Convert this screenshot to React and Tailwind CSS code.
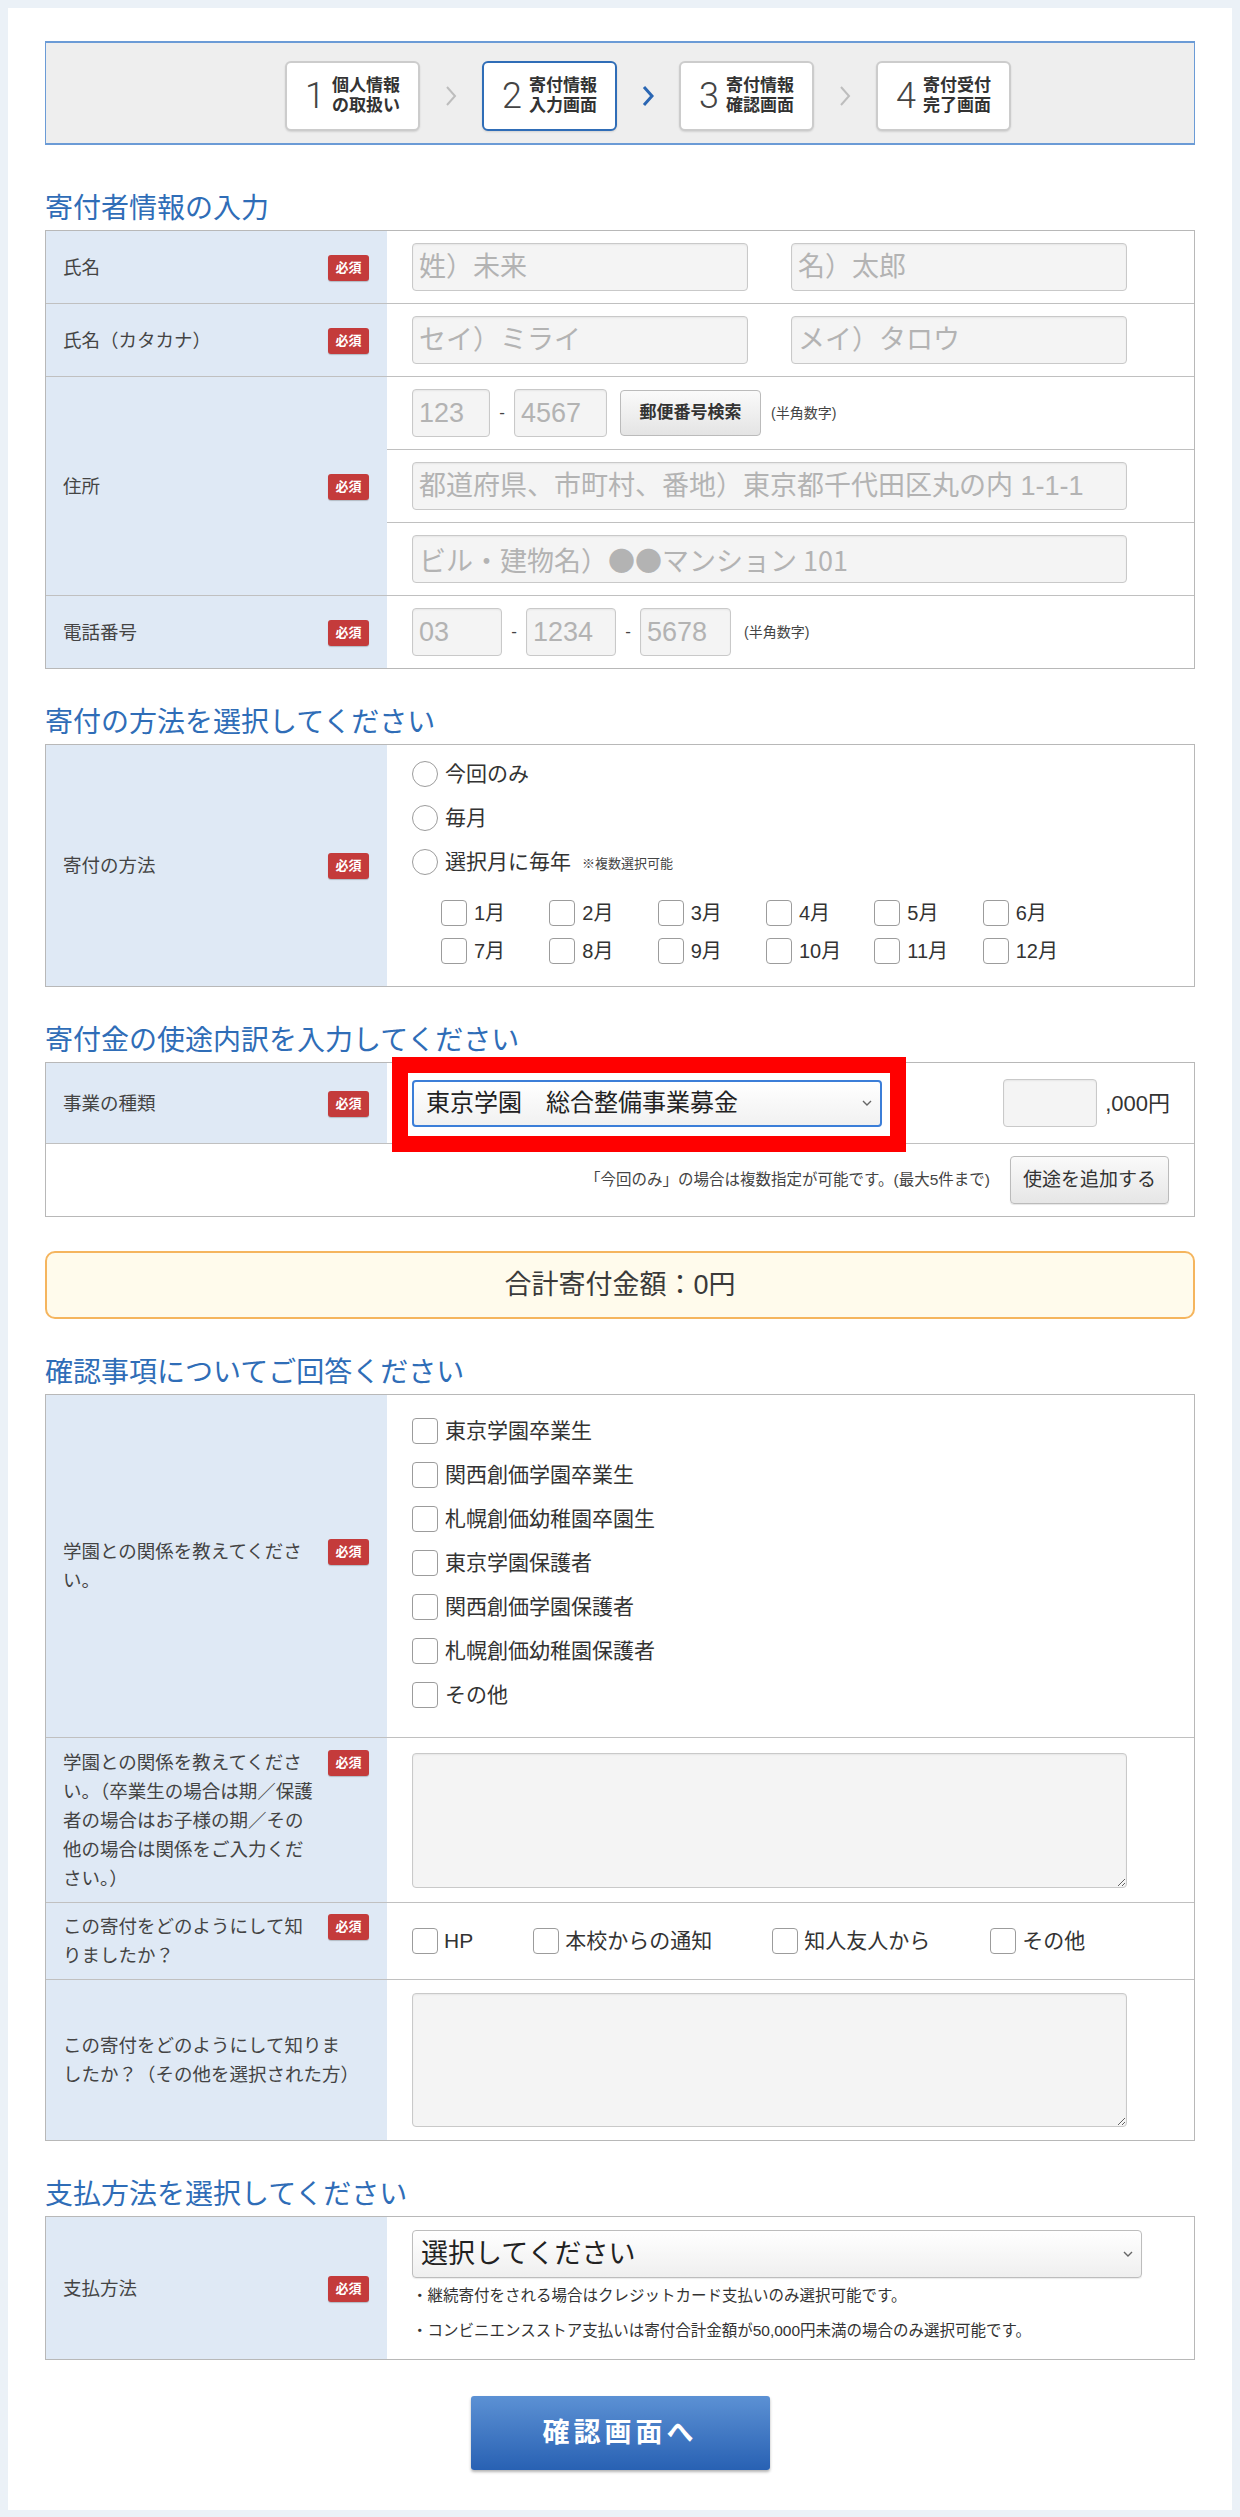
const Req = () => (
  <span className="shrink-0 w-[41px] h-[26px] mt-[2px] rounded-[3px] bg-[#c43b3b] text-white text-[13px] font-bold flex items-center justify-center shadow-[0_1px_1px_rgba(0,0,0,0.2)]">
    必須
  </span>
);

const Label = ({ children, req = true }) => (
  <div className="w-[341px] shrink-0 bg-[#dfe9f5] flex items-center pl-[17px] pr-[18px] py-[9px]">
    <div className="flex-1 flex items-start justify-between gap-2">
      <span className="text-[18.5px] leading-[29px] text-[#444] whitespace-nowrap">{children}</span>
      {req && <Req />}
    </div>
  </div>
);

const Row = ({ label, req = true, first = false, valueClass = '', children }) => (
  <div className={`flex ${first ? '' : 'border-t border-[#c0c0c0]'}`}>
    <Label req={req}>{label}</Label>
    <div className={`flex-1 ${valueClass}`}>{children}</div>
  </div>
);

const TextInput = ({ placeholder, w, cjk = false }) => (
  <input
    className={`${w} h-[48px] shrink-0 rounded-[4px] border border-[#c9c9c9] bg-[#f4f4f4] px-[6px] text-[27px] text-[#333] placeholder:text-[#b3b3b3] shadow-[inset_0_1px_2px_rgba(0,0,0,0.06)] outline-none ${
      cjk ? "font-['Noto_Sans_CJK_JP',sans-serif]" : ''
    }`}
    placeholder={placeholder}
  />
);

const Dash = () => <span className="w-[24px] text-center text-[17px] text-[#444]">-</span>;

const Radio = () => (
  <span className="w-[26px] h-[26px] shrink-0 rounded-full border border-[#9c9c9c] bg-white" />
);

const Check = () => (
  <span className="w-[26px] h-[26px] shrink-0 rounded-[4px] border border-[#9c9c9c] bg-white" />
);

const Caret = () => (
  <svg width="10" height="7" viewBox="0 0 10 7" className="shrink-0">
    <polyline points="1,1 5,5 9,1" fill="none" stroke="#666" strokeWidth="1.4" />
  </svg>
);

const Heading = ({ children, top = 'mt-[36px]' }) => (
  <h2 className={`${top} mb-[3px] text-[28px] leading-[36px] text-[#2f6db7]`}>{children}</h2>
);

const Step = ({ n, l1, l2, active }) => (
  <div
    className={`w-[135px] h-[70px] rounded-[6px] bg-white flex items-center justify-center gap-[7px] shadow-[0_1px_2px_rgba(0,0,0,0.12)] ${
      active ? 'border-2 border-[#2f6db7]' : 'border-2 border-[#cccccc]'
    }`}
  >
    <span className="font-['Roboto'] font-light text-[36px] leading-none text-[#444]">{n}</span>
    <span className="text-[17px] leading-[20px] font-bold text-[#333]">
      {l1}
      <br />
      {l2}
    </span>
  </div>
);

const Chevron = ({ active }) => (
  <div className="w-[62px] flex justify-center">
    <svg width="12" height="22" viewBox="0 0 12 22">
      <polyline
        points="2,2 10,11 2,20"
        fill="none"
        stroke={active ? '#2a66b3' : '#bdbdbd'}
        strokeWidth={active ? 3 : 2}
      />
    </svg>
  </div>
);

const months = ['1月', '2月', '3月', '4月', '5月', '6月', '7月', '8月', '9月', '10月', '11月', '12月'];
const relations = ['東京学園卒業生', '関西創価学園卒業生', '札幌創価幼稚園卒園生', '東京学園保護者', '関西創価学園保護者', '札幌創価幼稚園保護者', 'その他'];
const sources = ['HP', '本校からの通知', '知人友人から', 'その他'];

export default function App() {
  return (
    <div className="min-h-screen bg-[#ebf1f7] p-2 font-['Liberation_Sans','Noto_Sans_CJK_JP',sans-serif] text-[#333]">
      <div className="bg-white px-[37px] pt-[33px] pb-[40px]">
        {/* Steps */}
        <div className="h-[104px] bg-[#eeeeee] border-y-2 border-x border-[#6b9bd6] flex items-center justify-center pt-[6px] pl-[56px]">
          <Step n="1" l1="個人情報" l2="の取扱い" />
          <Chevron />
          <Step n="2" l1="寄付情報" l2="入力画面" active />
          <Chevron active />
          <Step n="3" l1="寄付情報" l2="確認画面" />
          <Chevron />
          <Step n="4" l1="寄付受付" l2="完了画面" />
        </div>

        {/* 寄付者情報 */}
        <Heading top="mt-[46px]">寄付者情報の入力</Heading>
        <div className="border border-[#b8b8b8]">
          <Row label="氏名" first valueClass="flex items-center gap-[43px] px-[25px] py-3">
            <TextInput w="w-[336px]" placeholder="姓）未来" />
            <TextInput w="w-[336px]" placeholder="名）太郎" />
          </Row>
          <Row label="氏名（カタカナ）" valueClass="flex items-center gap-[43px] px-[25px] py-3">
            <TextInput w="w-[336px]" placeholder="セイ）ミライ" />
            <TextInput w="w-[336px]" placeholder="メイ）タロウ" />
          </Row>
          <Row label="住所">
            <div className="flex items-center px-[25px] py-3">
              <TextInput w="w-[78px]" placeholder="123" />
              <Dash />
              <TextInput w="w-[93px]" placeholder="4567" />
              <button className="ml-[13px] w-[141px] h-[46px] rounded-[4px] border border-[#bbbbbb] bg-gradient-to-b from-[#fafafa] to-[#e4e4e4] text-[17px] font-bold text-[#333]">
                郵便番号検索
              </button>
              <span className="ml-[10px] text-[14px] text-[#444]">(半角数字)</span>
            </div>
            <div className="border-t border-[#c0c0c0] px-[25px] py-3">
              <TextInput w="w-[715px]" placeholder="都道府県、市町村、番地）東京都千代田区丸の内 1-1-1" />
            </div>
            <div className="border-t border-[#c0c0c0] px-[25px] py-3">
              <TextInput w="w-[715px]" cjk placeholder="ビル・建物名）●●マンション 101" />
            </div>
          </Row>
          <Row label="電話番号" valueClass="flex items-center px-[25px] py-3">
            <TextInput w="w-[90px]" placeholder="03" />
            <Dash />
            <TextInput w="w-[90px]" placeholder="1234" />
            <Dash />
            <TextInput w="w-[91px]" placeholder="5678" />
            <span className="ml-[13px] text-[14px] text-[#444]">(半角数字)</span>
          </Row>
        </div>

        {/* 寄付の方法 */}
        <Heading>寄付の方法を選択してください</Heading>
        <div className="border border-[#b8b8b8]">
          <Row label="寄付の方法" first valueClass="px-[25px] pt-[7px] pb-[16px]">
            <div className="h-[44px] flex items-center gap-[7px]">
              <Radio />
              <span className="text-[21px]">今回のみ</span>
            </div>
            <div className="h-[44px] flex items-center gap-[7px]">
              <Radio />
              <span className="text-[21px]">毎月</span>
            </div>
            <div className="h-[44px] flex items-center gap-[7px]">
              <Radio />
              <span className="text-[21px]">選択月に毎年</span>
              <span className="ml-[4px] mt-[4px] text-[13px] text-[#444]">※複数選択可能</span>
            </div>
            <div className="mt-[10px] ml-[29px] w-[650px] grid grid-cols-6">
              {months.map((m) => (
                <div key={m} className="h-[38px] flex items-center gap-[7px]">
                  <Check />
                  <span className="text-[20px]">{m}</span>
                </div>
              ))}
            </div>
          </Row>
        </div>

        {/* 使途内訳 */}
        <Heading>寄付金の使途内訳を入力してください</Heading>
        <div className="border border-[#b8b8b8]">
          <Row label="事業の種類" first valueClass="flex items-center pl-[25px] pr-[24px] py-[16px]">
            <div className="relative w-[470px] h-[47px] shrink-0">
              <div className="h-full rounded-[4px] border-2 border-[#3b7ed8] bg-gradient-to-b from-white to-[#f1f1f1] flex items-center justify-between pl-[12px] pr-[8px]">
                <span className="text-[24px] text-[#222]">東京学園　総合整備事業募金</span>
                <Caret />
              </div>
              <div className="absolute -left-[20px] -right-[24px] -top-[23px] -bottom-[25px] border-[16px] border-[#ff0000] z-10 pointer-events-none" />
            </div>
            <div className="ml-auto flex items-center">
              <TextInput w="w-[94px]" placeholder="" />
              <span className="ml-[8px] text-[22px] text-[#333]">,000円</span>
            </div>
          </Row>
          <div className="border-t border-[#c0c0c0] flex items-center justify-end gap-[20px] py-3 pr-[25px]">
            <span className="text-[15.5px] text-[#444]">「今回のみ」の場合は複数指定が可能です。(最大5件まで)</span>
            <button className="w-[159px] h-[48px] rounded-[4px] border border-[#bbbbbb] bg-gradient-to-b from-[#fafafa] to-[#e6e6e6] text-[19px] text-[#333] shadow-[0_1px_1px_rgba(0,0,0,0.1)]">
              使途を追加する
            </button>
          </div>
        </div>

        {/* 合計 */}
        <div className="mt-[34px] h-[68px] rounded-[10px] border-2 border-[#f5b55e] bg-[#fffbec] flex items-center justify-center">
          <span className="text-[27px] text-[#3a3a3a]">合計寄付金額：0円</span>
        </div>

        {/* 確認事項 */}
        <Heading>確認事項についてご回答ください</Heading>
        <div className="border border-[#b8b8b8]">
          <Row
            first
            label={
              <>
                学園との関係を教えてくださ
                <br />
                い。
              </>
            }
            valueClass="px-[25px] pt-[14px] pb-[20px]"
          >
            {relations.map((r) => (
              <div key={r} className="h-[44px] flex items-center gap-[7px]">
                <Check />
                <span className="text-[21px]">{r}</span>
              </div>
            ))}
          </Row>
          <Row
            label={
              <>
                学園との関係を教えてくださ
                <br />
                い。（卒業生の場合は期／保護
                <br />
                者の場合はお子様の期／その
                <br />
                他の場合は関係をご入力くだ
                <br />
                さい。）
              </>
            }
            valueClass="px-[25px] pt-[15px] pb-[14px] flex items-center"
          >
            <textarea className="w-[715px] h-[135px] rounded-[4px] border border-[#c9c9c9] bg-[#f4f4f4] shadow-[inset_0_1px_2px_rgba(0,0,0,0.06)] outline-none" />
          </Row>
          <Row
            label={
              <>
                この寄付をどのようにして知
                <br />
                りましたか？
              </>
            }
            valueClass="px-[25px] flex items-center gap-[60px]"
          >
            {sources.map((s) => (
              <div key={s} className="flex items-center gap-[6px]">
                <Check />
                <span className="text-[21px]">{s}</span>
              </div>
            ))}
          </Row>
          <Row
            req={false}
            label={
              <>
                この寄付をどのようにして知りま
                <br />
                したか？（その他を選択された方）
              </>
            }
            valueClass="px-[25px] py-[13px] flex items-center"
          >
            <textarea className="w-[715px] h-[134px] rounded-[4px] border border-[#c9c9c9] bg-[#f4f4f4] shadow-[inset_0_1px_2px_rgba(0,0,0,0.06)] outline-none" />
          </Row>
        </div>

        {/* 支払方法 */}
        <Heading>支払方法を選択してください</Heading>
        <div className="border border-[#b8b8b8]">
          <Row label="支払方法" first valueClass="px-[25px] pt-[13px] pb-[11px]">
            <div className="w-[730px] h-[48px] rounded-[4px] border border-[#bdbdbd] bg-gradient-to-b from-white to-[#efefef] flex items-center justify-between pl-[8px] pr-[8px] shadow-[0_1px_1px_rgba(0,0,0,0.08)]">
              <span className="text-[27px] text-[#222]">選択してください</span>
              <Caret />
            </div>
            <p className="text-[15.5px] leading-[35px] text-[#333]">・継続寄付をされる場合はクレジットカード支払いのみ選択可能です。</p>
            <p className="text-[15.5px] leading-[35px] text-[#333]">・コンビニエンスストア支払いは寄付合計金額が50,000円未満の場合のみ選択可能です。</p>
          </Row>
        </div>

        <div className="mt-[36px] flex justify-center">
          <button className="w-[299px] h-[74px] rounded-[3px] bg-gradient-to-b from-[#5c91d4] to-[#2861b3] text-white text-[27px] font-bold tracking-[4px] shadow-[0_2px_3px_rgba(0,0,0,0.3)]">
            確認画面へ
          </button>
        </div>
      </div>
    </div>
  );
}
